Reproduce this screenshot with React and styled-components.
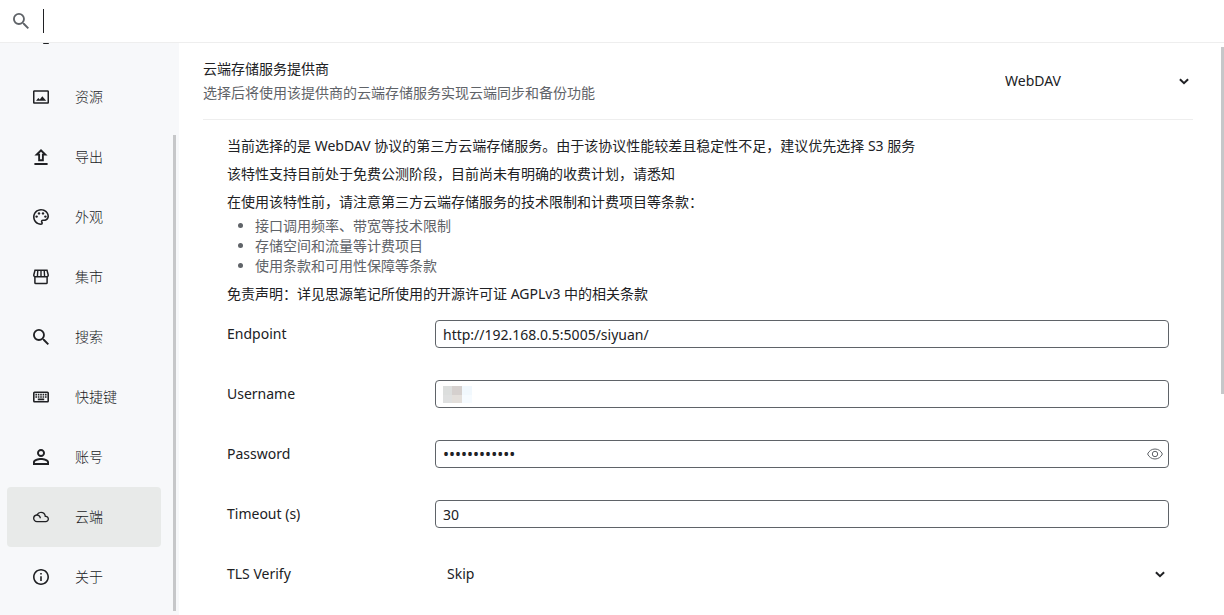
import { useState } from "react";
import styled, { createGlobalStyle, css } from "styled-components";
import {
  MdFilterDrama,
  MdOutlineInfo,
  MdOutlineKeyboard,
  MdOutlinePalette,
  MdPersonOutline,
  MdSearch,
} from "react-icons/md";

const GlobalStyle = createGlobalStyle`
  * {
    box-sizing: border-box;
  }
  body {
    margin: 0;
    color: #202124;
    background-color: #fff;
    font-family: "Noto Sans", "Noto Sans CJK SC", sans-serif;
    font-size: 14px;
    line-height: 20px;
  }
  button, input, select {
    font: inherit;
    color: inherit;
  }
`;

const Shell = styled.div`
  display: flex;
  flex-direction: column;
  height: 100vh;
  overflow: hidden;
`;

const SearchBar = styled.label`
  display: flex;
  flex: none;
  align-items: center;
  gap: 14px;
  padding: 9px 13px;
  color: #5f6368;
  border-bottom: 1px solid #eee;
`;

const SearchInput = styled.input`
  flex: 1;
  height: 24px;
  padding: 0 4px;
  border: none;
  border-left: 1px solid #202124;
  color: #202124;
  background: transparent;
  outline: none;
`;

const Body = styled.div`
  display: flex;
  flex: 1;
  min-height: 0;
`;

const Sidebar = styled.aside`
  display: flex;
  flex: none;
  width: 179px;
  padding-right: 3px;
  background-color: #f7f8fa;
`;

const Menu = styled.nav`
  display: flex;
  flex: 1;
  flex-direction: column;
  justify-content: flex-end;
  padding: 0 12px 8px 7px;
  overflow: hidden;
`;

const MenuItem = styled.button`
  display: flex;
  flex: none;
  align-items: center;
  gap: 26px;
  height: 60px;
  padding: 0 26px;
  border: none;
  border-radius: 4px;
  font-weight: 300;
  text-align: left;
  background-color: ${({ $active }) => ($active ? "#e8eae9" : "transparent")};
  cursor: pointer;
`;

const Track = styled.div`
  display: flex;
  flex: none;
  flex-direction: column;
  justify-content: ${({ $end }) => ($end ? "flex-end" : "flex-start")};
  width: 3px;
  padding: 4px 0;
`;

const Thumb = styled.div`
  height: ${({ $size }) => $size};
  background-color: #c6c7c9;
`;

const Content = styled.main`
  flex: 1;
  min-width: 0;
  padding: 0 28px 0 24px;
  overflow: hidden;
`;

const Provider = styled.section`
  display: flex;
  align-items: center;
  justify-content: space-between;
  padding: 16px 0;
  border-bottom: 1px solid #eee;
`;

const ProviderText = styled.label`
  display: flex;
  flex-direction: column;
  gap: 4px;
`;

const Muted = styled.span`
  color: #5f6368;
`;

const Details = styled.section`
  padding: 16px 24px 0;
`;

const Note = styled.p`
  margin: 0 0 8px;
  &:last-of-type {
    margin-bottom: 0;
  }
`;

const Terms = styled.ul`
  margin: -4px 0 8px;
  padding-left: 28px;
  color: #5f6368;
`;

const Field = styled.div`
  display: flex;
  align-items: center;
  padding: 16px 0;
`;

const FieldLabel = styled.label`
  flex: none;
  width: 208px;
`;

const Control = styled.div`
  position: relative;
  display: flex;
  flex: ${({ $width }) => ($width ? "none" : "1")};
  width: ${({ $width }) => $width || "auto"};
`;

const box = css`
  width: 100%;
  height: 28px;
  border-radius: 4px;
  outline: none;
`;

const TextInput = styled.input`
  ${box}
  padding: 0 7px;
  border: 1px solid #5f6368;
  background-color: #fff;
  &[type="password"] {
    font-size: 16px;
  }
`;

const Select = styled.select`
  ${box}
  padding: 0 12px;
  border: none;
  background-color: transparent;
  appearance: none;
`;

const Arrow = styled.svg`
  position: absolute;
  top: 11px;
  right: 4px;
  pointer-events: none;
`;

const EyeButton = styled.button`
  position: absolute;
  top: 6px;
  right: 6px;
  display: flex;
  padding: 0;
  border: none;
  color: #5f6368;
  background: transparent;
`;

const Mosaic = styled.div`
  position: absolute;
  top: 6px;
  left: 8px;
  display: grid;
  grid-template-columns: 9px 10px 10px;
  grid-template-rows: 9px 8px;
  pointer-events: none;
`;

const Tile = styled.span`
  background-color: ${({ $color }) => $color};
`;

const SparkleIcon = () => (
  <svg width="16" height="16" viewBox="0 0 16 16" fill="currentColor">
    <path d="M6 1l1.6 3.9 3.9 1.6-3.9 1.6L6 12 4.400 8.100.5 6.500l3.900-1.600z" />
    <path d="M10.200 12.500h5.600v2.500h-5.600z" />
  </svg>
);

const ImageIcon = () => (
  <svg width="16" height="16" viewBox="0 0 16 16" fill="currentColor">
    <path
      fillRule="evenodd"
      d="M1.300 1.300h13.400c.7 0 1.300.6 1.300 1.300v10.800c0 .7-.6 1.300-1.300 1.300H1.300C.6 14.700 0 14.100 0 13.400V2.600c0-.7.6-1.300 1.300-1.300zm.2 1.500v10.400h13V2.800z"
    />
    <path d="M3 11.800l2.300-2.900 1.500 1.600 2.500-3.300 3.900 4.600z" />
  </svg>
);

const UploadIcon = () => (
  <svg width="16" height="16" viewBox="3.500 3 17 17" fill="currentColor">
    <path d="M9 16h6v-6h4l-7-7-7 7h4v6zm3-10.170L14.170 8H13v6h-2V8H9.830L12 5.830zM5 18h14v2H5z" />
  </svg>
);

const StoreIcon = () => (
  <svg width="16" height="16" viewBox="0 0 16 16" fill="none" stroke="currentColor">
    <path strokeWidth="1.500" d="M2 1.200h12l1.200 4.600c.2 1.200-.6 2-1.700 2h-11c-1.100 0-1.900-.8-1.700-2z" />
    <path strokeWidth="1.400" d="M4.800 1.200l-.4 6.400M8 1.200v6.400M11.200 1.200l.4 6.400" />
    <path strokeWidth="1.500" d="M1.900 7.600v6.100c0 .5.4.9.9.9h10.400c.5 0 .9-.4.9-.9V7.600" />
  </svg>
);

const EyeIcon = () => (
  <svg width="16" height="16" viewBox="0 0 16 16" fill="none" stroke="currentColor">
    <path d="M.6 8C2 4.900 4.700 3 8 3s6 1.900 7.400 5C14 11.100 11.300 13 8 13S2 11.100.6 8z" />
    <circle cx="8" cy="8" r="2.700" />
  </svg>
);

const Chevron = () => (
  <Arrow width="10" height="7" viewBox="0 0 10 7" fill="none" stroke="#202124" strokeWidth="2">
    <path d="M.9 1.200L5 5.100l4.100-3.900" />
  </Arrow>
);

const menu = [
  { id: "ai", icon: <SparkleIcon /> },
  { id: "assets", label: "资源", icon: <ImageIcon /> },
  { id: "export", label: "导出", icon: <UploadIcon /> },
  { id: "appearance", label: "外观", icon: <MdOutlinePalette size={16} viewBox="2 2 20 20" /> },
  { id: "bazaar", label: "集市", icon: <StoreIcon /> },
  { id: "search", label: "搜索", icon: <MdSearch size={16} viewBox="3 3 17.500 17.500" /> },
  { id: "keymap", label: "快捷键", icon: <MdOutlineKeyboard size={16} viewBox="2 2 20 20" /> },
  { id: "account", label: "账号", icon: <MdPersonOutline size={16} viewBox="4 4 16 16" /> },
  { id: "cloud", label: "云端", icon: <MdFilterDrama size={16} /> },
  { id: "about", label: "关于", icon: <MdOutlineInfo size={16} viewBox="2 2 20 20" /> },
];

const tiles = ["#dcdedd", "#d5d0ce", "#f1f8fd", "#dfe0e0", "#e3dfdb", "#f6fbff"];

function App() {
  const [active, setActive] = useState("cloud");
  const [visible, setVisible] = useState(false);

  return (
    <Shell>
      <GlobalStyle />
      <SearchBar>
        <MdSearch size={16} viewBox="3 3 17.500 17.500" />
        <SearchInput type="text" aria-label="搜索" />
      </SearchBar>
      <Body>
        <Sidebar>
          <Menu>
            {menu.map(({ id, label, icon }) => (
              <MenuItem
                key={id}
                type="button"
                aria-label={label || id}
                $active={id === active}
                onClick={() => setActive(id)}
              >
                {icon}
                {label && <span>{label}</span>}
              </MenuItem>
            ))}
          </Menu>
          <Track $end>
            <Thumb $size="84.4%" />
          </Track>
        </Sidebar>
        <Content>
          <Provider>
            <ProviderText htmlFor="provider">
              <span>云端存储服务提供商</span>
              <Muted>选择后将使用该提供商的云端存储服务实现云端同步和备份功能</Muted>
            </ProviderText>
            <Control $width="200px">
              <Select id="provider" defaultValue="WebDAV">
                <option>SiYuan</option>
                <option>S3</option>
                <option>WebDAV</option>
              </Select>
              <Chevron />
            </Control>
          </Provider>
          <Details>
            <Note>
              当前选择的是 WebDAV 协议的第三方云端存储服务。由于该协议性能较差且稳定性不足，建议优先选择 S3 服务
            </Note>
            <Note>该特性支持目前处于免费公测阶段，目前尚未有明确的收费计划，请悉知</Note>
            <Note>在使用该特性前，请注意第三方云端存储服务的技术限制和计费项目等条款：</Note>
            <Terms>
              <li>接口调用频率、带宽等技术限制</li>
              <li>存储空间和流量等计费项目</li>
              <li>使用条款和可用性保障等条款</li>
            </Terms>
            <Note>免责声明：详见思源笔记所使用的开源许可证 AGPLv3 中的相关条款</Note>
            <Field>
              <FieldLabel htmlFor="endpoint">Endpoint</FieldLabel>
              <Control>
                <TextInput id="endpoint" defaultValue="http://192.168.0.5:5005/siyuan/" />
              </Control>
            </Field>
            <Field>
              <FieldLabel htmlFor="username">Username</FieldLabel>
              <Control>
                <TextInput id="username" />
                <Mosaic>
                  {tiles.map((color) => (
                    <Tile key={color} $color={color} />
                  ))}
                </Mosaic>
              </Control>
            </Field>
            <Field>
              <FieldLabel htmlFor="password">Password</FieldLabel>
              <Control>
                <TextInput
                  id="password"
                  type={visible ? "text" : "password"}
                  defaultValue="siyuanwebdav"
                />
                <EyeButton
                  type="button"
                  aria-label="Show password"
                  onClick={() => setVisible(!visible)}
                >
                  <EyeIcon />
                </EyeButton>
              </Control>
            </Field>
            <Field>
              <FieldLabel htmlFor="timeout">Timeout (s)</FieldLabel>
              <Control>
                <TextInput id="timeout" defaultValue="30" />
              </Control>
            </Field>
            <Field>
              <FieldLabel htmlFor="tls">TLS Verify</FieldLabel>
              <Control>
                <Select id="tls" defaultValue="Skip">
                  <option>Verify</option>
                  <option>Skip</option>
                </Select>
                <Chevron />
              </Control>
            </Field>
          </Details>
        </Content>
        <Track>
          <Thumb $size="61.5%" />
        </Track>
      </Body>
    </Shell>
  );
}

export default App;
